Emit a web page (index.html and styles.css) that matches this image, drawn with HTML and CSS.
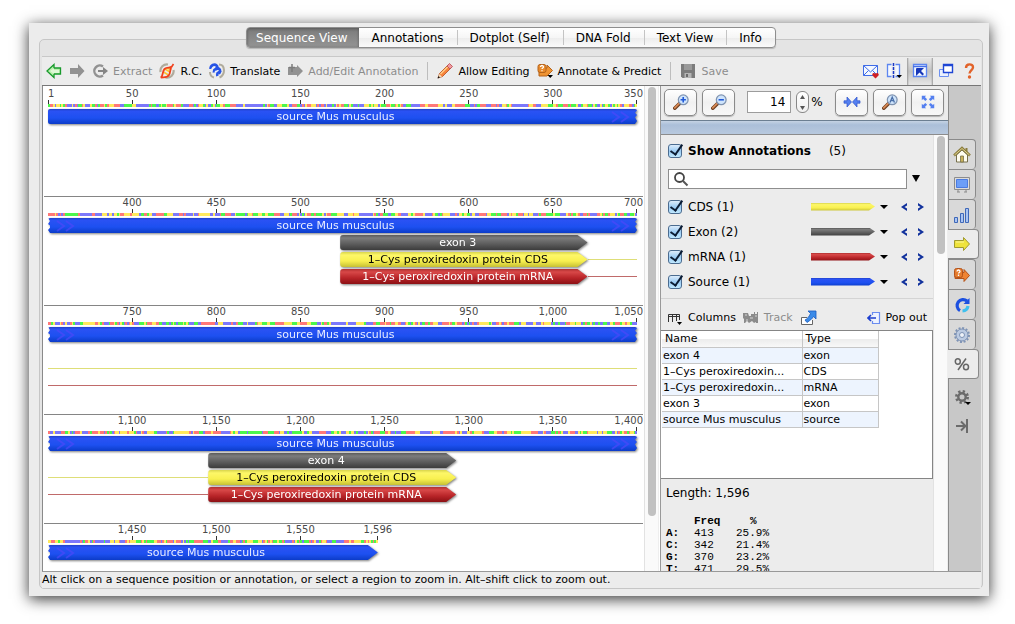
FILE: index.html
```html
<!DOCTYPE html>
<html lang="en">
<head>
  <meta charset="UTF-8">
  <title>Sequence View</title>
  <link rel="stylesheet" href="styles.css">
</head>
<body>

  <div class="window">
    <nav class="tabs">
      <button class="tab active">Sequence View</button>
      <button class="tab">Annotations</button>
      <button class="tab">Dotplot (Self)</button>
      <button class="tab">DNA Fold</button>
      <button class="tab">Text View</button>
      <button class="tab">Info</button>
    </nav>

    <div class="frame">
      <div class="toolbar">
        <button class="tool" aria-label="Back">
          <svg width="16" height="16" viewBox="0 0 16 16"><path d="M1 8 8 1.500V5h6.500v6H8v3.500z" fill="#b9f0ac" stroke="#189a2c" stroke-width="1.300"/><path d="M4 8 8 5v2h5v3H8v1z" fill="#dff8d6"/></svg>
        </button>
        <button class="tool" aria-label="Forward" disabled>
          <svg width="16" height="16" viewBox="0 0 16 16"><path d="M15.500 8 9 1v4H1v6h8v4z" fill="#929292"/></svg>
        </button>
        <button class="tool" disabled>
          <svg width="16" height="16" viewBox="0 0 16 16"><path d="M11 3.500A5.500 5.500 0 1 0 11 12.500" fill="none" stroke="#929292" stroke-width="2.400"/><path d="M6 7h5V4l5 4-5 4V9H6z" fill="#858585"/></svg>
          Extract
        </button>
        <button class="tool">
          <svg width="16" height="16" viewBox="0 0 16 16"><path d="M1.500 9A6.500 6.500 0 0 1 9 1.500M14.500 7a6.500 6.500 0 0 1-8 7.500" fill="none" stroke="#b0ab9c" stroke-width="2.200"/><path d="M6 6l5 3M4.500 9l5 3M8 4.500l4 2.500" stroke="#ffc42e" stroke-width="1.600"/><path d="M1.500 14.500c3-1 1.500-6 4-8.500s5.500-.5 7.500-2.500M2 14.500c3-.5 6 .5 8-2.500s0-6 4.500-11" fill="none" stroke="#f0401c" stroke-width="1.800"/></svg>
          R.C.
        </button>
        <button class="tool">
          <svg width="16" height="16" viewBox="0 0 16 16"><path d="M10 1.500c6 0 7 10 .5 13M1 9c0 3 2 5 4 5.500" fill="none" stroke="#b0ab9c" stroke-width="2"/><path d="M1.500 6c0-4 4-5.500 6-3.500 1.500 1.500 1 3.500-.5 4.500M5 9.500c-.5-3.500 3-5.500 5.200-3.500 1.500 1.500 1 3.500-.5 4.500M8.500 13c-1-3 1.500-5 3.700-3.800" fill="none" stroke="#2754e6" stroke-width="2.600"/><path d="M2.500 5.500 6 4.500M5.800 9l3.500-1.500" stroke="#eef3ff" stroke-width="1.200"/></svg>
          Translate
        </button>
        <button class="tool" disabled>
          <svg width="16" height="16" viewBox="0 0 16 16"><path d="M1 4h9V2l6 6-6 6v-2H1z" fill="#929292"/><path d="M5 1v8M2 4.500h6" stroke="#7b7b7b" stroke-width="1.500"/></svg>
          Add/Edit Annotation
        </button>
        <span class="sep"></span>
        <button class="tool">
          <svg width="16" height="16" viewBox="0 0 16 16"><path d="M1 15l1.500-4.500L10.500 2.500 13.500 5.500 5.500 13.500z" fill="#f7833c" stroke="#b24a1a" stroke-width=".8"/><path d="M3.500 11 11 3.500" stroke="#ffd08a" stroke-width="1.300"/><path d="M10 3 12.500.5l3 3-2.500 2.500z" fill="#f09aa0" stroke="#b8464c" stroke-width=".8"/><path d="M1 15l1.300-4 2.700 2.700z" fill="#f3ddbb"/><path d="M.5 15.500 1.500 13l1.500 1.500z" fill="#111"/></svg>
          Allow Editing
        </button>
        <button class="tool">
          <svg width="16" height="16" viewBox="0 0 16 16"><path d="M7 5h3V2l5.500 5.500L10 13H2V8" fill="#ef9433" stroke="#b4631b"/><rect x="1" y="1.500" width="8" height="8" rx="2" fill="#e98b2c" stroke="#b4631b"/><path d="M3.500 4c0-2 3-2 3 0 0 1-1.500 1-1.500 2M5 7.300v1" fill="none" stroke="#fff" stroke-width="1.300"/><path d="M10.500 12H16l-2.750 3z"/></svg>
          Annotate &amp; Predict
        </button>
        <span class="sep"></span>
        <button class="tool" disabled>
          <svg width="16" height="16" viewBox="0 0 16 16"><path d="M1 1h14v14H2.500L1 13.500z" fill="#7c7c7c"/><path d="M4 1h8v6H4z" fill="#9a9a9a"/><path d="M4.500 10h7v5h-7z" fill="#b5b5b5"/><path d="M6 11h2v3H6z" fill="#6b6b6b"/></svg>
          Save
        </button>

        <span class="spacer"></span>

        <button class="tool" aria-label="Send mail">
          <svg width="16" height="16" viewBox="0 0 16 16"><path d="M.5 2.500h14v10H.5z" fill="#f4f8ff" stroke="#3f6ce8"/><path d="M.5 2.500 7.500 9l7-6.500M.5 12.500l5-5M14.500 12.500l-5-5" fill="none" stroke="#3f6ce8"/><path d="M12.500 15.500 9.500 12.500c-1-2 1.500-3.500 3-1.700 1.500-1.800 4-.3 3 1.700z" fill="#cf1f25"/></svg>
        </button>
        <button class="tool" aria-label="Split view">
          <svg width="16" height="16" viewBox="0 0 16 16"><path d="M5.500 1.500h-4v12h4M9.500 1.500h4v12h-4" fill="#f4f8ff" stroke="#5d86f0" stroke-width="1.300"/><path d="M7.500 0v16" stroke="#1737c8" stroke-width="1.500" stroke-dasharray="3 1"/><path d="M10.500 12H16l-2.750 3z"/></svg>
        </button>
        <button class="tool pressed" aria-label="Dock panel">
          <svg width="16" height="16" viewBox="0 0 16 16"><path d="M1.500 1.500h13v12h-13z" fill="#f4f8ff" stroke="#5d86f0" stroke-width="1.300"/><path d="M1 3.500h14" stroke="#4670e8" stroke-width="1.500"/><path d="M5 12V6h6L9 8l3 3-1.500 1.500-3-3z" fill="#1737b8"/><path d="M4.500 12.500v-7h7" fill="none" stroke="#1737b8"/></svg>
        </button>
        <button class="tool" aria-label="New window">
          <svg width="16" height="16" viewBox="0 0 16 16"><path d="M1.500 6.500h9v7h-9z" fill="#eaf1ff" stroke="#6c90f0"/><path d="M5.500 1.500h9v8h-9z" fill="#fff" stroke="#1f46d4" stroke-width="1.400"/><path d="M5 2.500h10" stroke="#1f46d4" stroke-width="1.500"/></svg>
        </button>
        <button class="tool" aria-label="Help">
          <svg width="16" height="16" viewBox="0 0 16 16"><path d="M5 5c0-5 7-4.500 7-.8C12 7 8.800 7 8.500 10.500" fill="none" stroke="#e2632a" stroke-width="2.400"/><circle cx="8.500" cy="14" r="1.700" fill="#e2632a"/></svg>
        </button>
      </div>

      <div class="content">
        <div class="map">
          <div id="rows" class="rows"></div>
          <div class="scrollbar"><div class="thumb"></div></div>
        </div>

        <div class="side">
          <div class="zoombar">
            <button class="key" aria-label="Zoom in">
              <svg width="16" height="16" viewBox="0 0 18 18"><path d="M2 16l6-6" stroke="#6d3f22" stroke-width="4" stroke-linecap="round"/><path d="M2 15.500l5-5" stroke="#d98a55" stroke-width="2" stroke-linecap="round"/><circle cx="11.500" cy="6.500" r="5.500" fill="#cfe4fb" stroke="#7f93b0" stroke-width="1.400"/><path d="M11.500 3.500v6M8.500 6.500h6" stroke="#2059d8" stroke-width="1.800"/></svg>
            </button>
            <button class="key" aria-label="Zoom out">
              <svg width="16" height="16" viewBox="0 0 18 18"><path d="M2 16l6-6" stroke="#6d3f22" stroke-width="4" stroke-linecap="round"/><path d="M2 15.500l5-5" stroke="#d98a55" stroke-width="2" stroke-linecap="round"/><circle cx="11.500" cy="6.500" r="5.500" fill="#cfe4fb" stroke="#7f93b0" stroke-width="1.400"/><path d="M8.500 6.500h6" stroke="#2059d8" stroke-width="1.800"/></svg>
            </button>
            <span class="spacer"></span>
            <input id="zoom" class="zoom" type="text" value="14">
            <span class="stepper">
              <button aria-label="Increase zoom"><svg width="7" height="5" viewBox="0 0 7 5"><path d="M3.500 0 6 4H1z" fill="#555"/></svg></button>
              <button aria-label="Decrease zoom"><svg width="7" height="5" viewBox="0 0 7 5"><path d="M3.500 5 6 1H1z" fill="#555"/></svg></button>
            </span>
            <label for="zoom">%</label>
            <span class="spacer"></span>
            <button class="key" aria-label="Collapse">
              <svg width="18" height="18" viewBox="0 0 18 18"><path d="M1 7.800h3V4l4.500 5L4 14v-3.800H1zM17 7.800h-3V4L9.500 9l4.500 5v-3.800h3z" fill="#5580f0" stroke="#2b52cc" stroke-width=".7"/></svg>
            </button>
            <button class="key" aria-label="Zoom to letters">
              <svg width="16" height="16" viewBox="0 0 18 18"><path d="M2 16l6-6" stroke="#6d3f22" stroke-width="4" stroke-linecap="round"/><path d="M2 15.500l5-5" stroke="#d98a55" stroke-width="2" stroke-linecap="round"/><circle cx="11.500" cy="6.500" r="5.500" fill="#cfe4fb" stroke="#7f93b0" stroke-width="1.400"/><path d="M9 9.500 11.500 3.500 14 9.500M10 7.500h3" fill="none" stroke="#4a6fa8" stroke-width="1.500"/></svg>
            </button>
            <button class="key" aria-label="Fit to window">
              <svg width="16" height="16" viewBox="0 0 18 18"><path d="M2 7V2h5L5.500 3.500 8 6 6 8 3.500 5.500zM11 2h5v5l-1.500-1.500L12 8l-2-2 2.500-2.500zM16 11v5h-5l1.500-1.500L10 12l2-2 2.500 2.500zM7 16H2v-5l1.500 1.500L6 10l2 2-2.500 2.500z" fill="#5580f0"/></svg>
            </button>
          </div>
          <div class="band"></div>

          <div class="side-body">
            <div class="options">
              <div class="annotations">
                <div class="line heading">
                  <input type="checkbox" id="show" class="check" checked>
                  <label for="show">Show Annotations</label>
                  <span class="count">(5)</span>
                </div>
                <div class="line search-line">
                  <div class="search">
                    <svg width="16" height="16" viewBox="0 0 16 16"><circle cx="6.500" cy="6.500" r="4.500" fill="none" stroke="#444" stroke-width="1.800"/><path d="M10 10l4.500 4.500" stroke="#555" stroke-width="2"/></svg>
                    <input type="text" aria-label="Filter annotations">
                  </div>
                  <button class="plain" aria-label="Search options"><svg width="8" height="7" viewBox="0 0 8 7"><path d="M0 0h8L4 7z"/></svg></button>
                </div>
                <div id="types"></div>
              </div>

              <div class="table-tools">
                <button class="tool">
                  <svg width="16" height="16" viewBox="0 0 16 16"><path d="M1.500 12V4.500h11V10M1 6.500h11M5.500 5v7M9.500 5v6" fill="none" stroke="#333"/><path d="M10 12h5l-2.500 3z"/></svg>
                  Columns
                </button>
                <button class="tool" disabled>
                  <svg width="16" height="16" viewBox="0 0 16 16"><path d="M0 3h5l1 3h2V4h3V2h1v2h2V2h1v11h-2v-1l-2 1-2-2-3 2-2-2-2 2H1v-4l-1-1z" fill="#8b8b8b"/><path d="M2 5h2M7 8h3M12 6h2M4 9v3" stroke="#d5d5d5"/></svg>
                  Track
                </button>
                <button class="tool" aria-label="Export">
                  <svg width="17" height="16" viewBox="0 0 17 16"><path d="M7 7.500H1.500v7h11V10" fill="#fff" stroke="#666"/><path d="M8 1h8v8l-2.500-2.500C12 9 10 10.500 7 12.500L5 10c2-1 4-3 5.500-6.500z" fill="#3b8be8" stroke="#1a5cc0" stroke-width=".8"/></svg>
                </button>
                <span class="spacer"></span>
                <button class="tool">
                  <svg width="14" height="14" viewBox="0 0 14 14"><path d="M5.500 4V1.500h7v11h-7V10" fill="#eef3ff" stroke="#6a8cf0" stroke-width="1.200"/><path d="M9 7H1M4 4 1 7l3 3" fill="none" stroke="#1d3fd0" stroke-width="1.600"/></svg>
                  Pop out
                </button>
              </div>

              <div class="table-box">
                <table class="list">
                  <thead>
                    <tr><th class="name">Name</th><th>Type</th></tr>
                  </thead>
                  <tbody>
                    <tr><td>exon 4</td><td>exon</td></tr>
                    <tr><td>1–Cys peroxiredoxin...</td><td>CDS</td></tr>
                    <tr><td>1–Cys peroxiredoxin...</td><td>mRNA</td></tr>
                    <tr><td>exon 3</td><td>exon</td></tr>
                    <tr><td>source Mus musculus</td><td>source</td></tr>
                  </tbody>
                </table>
              </div>

              <div class="stats">
                <p>Length: 1,596</p>
                <table class="freq">
                  <tr><th></th><th>Freq</th><th class="pct">%</th></tr>
                  <tr><th>A:</th><td>413</td><td>25.9%</td></tr>
                  <tr><th>C:</th><td>342</td><td>21.4%</td></tr>
                  <tr><th>G:</th><td>370</td><td>23.2%</td></tr>
                  <tr><th>T:</th><td>471</td><td>29.5%</td></tr>
                </table>
              </div>
            </div>
            <div class="scrollbar"><div class="thumb short"></div></div>
          </div>
        </div>

        <div class="dock">
          <button class="dock-tab" aria-label="Home">
            <svg width="18" height="18" viewBox="0 0 18 18"><path d="M3.500 9v7h11V9L9 4z" fill="#fffdf0" stroke="#77704d"/><path d="M1 9.500 9 2l8 7.500" fill="none" stroke="#8a7c3e" stroke-width="2.400"/><path d="M1.500 9 9 2.500 16.500 9" fill="none" stroke="#e0d28c"/><path d="M12.500 2h2v4l-2-2z" fill="#8a7c3e"/><path d="M7.500 10h3v6h-3z" fill="#c9b35a" stroke="#77704d" stroke-width=".8"/></svg>
          </button>
          <button class="dock-tab" aria-label="Display">
            <svg width="18" height="18" viewBox="0 0 18 18"><path d="M1.500 1.500h15v12h-15z" fill="#dcdcdc" stroke="#8c8c8c"/><path d="M3.500 3.500h11v8h-11z" fill="#6c9ef8" stroke="#4b7be0"/><path d="M5 14v2M13 14v2M4 16h3M11 16h3" stroke="#8c8c8c"/></svg>
          </button>
          <button class="dock-tab" aria-label="Graphs">
            <svg width="18" height="18" viewBox="0 0 18 18"><path d="M1.500 11.500h3v5h-3zM7.500 7.500h3v9h-3zM12.500 2.500h3v14h-3z" fill="#a8c4f4" stroke="#3f68b8"/></svg>
          </button>
          <button class="dock-tab active" aria-label="Annotations and tracks">
            <svg width="18" height="18" viewBox="0 0 18 18"><path d="M1.500 5.500h9v-3L16.500 9l-6 6.500v-3h-9z" fill="#efe33c" stroke="#a09a30"/><path d="M3 7h8" stroke="#fbf69a"/></svg>
          </button>
          <button class="dock-tab" aria-label="Annotate and predict">
            <svg width="18" height="18" viewBox="0 0 18 18"><path d="M7 6.500h4v-3L16.500 9.500l-5.500 6v-3H2v-4" fill="#ef8433" stroke="#b4531b"/><rect x="1.500" y="2.500" width="8" height="9" rx="2" fill="#e57b2c" stroke="#b4531b"/><path d="M4 5.500c0-2 3-2 3 0 0 1-1.500 1-1.500 2M5.500 8.500v1.500" fill="none" stroke="#fff" stroke-width="1.300"/></svg>
          </button>
          <button class="dock-tab" aria-label="Restriction">
            <svg width="18" height="18" viewBox="0 0 18 18"><path d="M14 5A6 6 0 1 0 7 14.700" fill="none" stroke="#1c50e0" stroke-width="3.200"/><path d="M9.500 15A6 6 0 0 0 15 10" fill="none" stroke="#3fc0ee" stroke-width="3.200"/><path d="M16.500 2v6h-6z" fill="#1c50e0"/></svg>
          </button>
          <button class="dock-tab" aria-label="Advanced">
            <svg width="18" height="18" viewBox="0 0 18 18"><circle cx="9" cy="9" r="7" fill="none" stroke="#7e93b5" stroke-width="2" stroke-dasharray="2 1.660"/><circle cx="9" cy="9" r="6" fill="#bccbe2" stroke="#7e93b5"/><circle cx="9" cy="9" r="2.500" fill="#eef2f8" stroke="#7e93b5"/></svg>
          </button>
          <button class="dock-tab active" aria-label="Statistics">
            <svg width="18" height="18" viewBox="0 0 18 18"><path d="M13 3.500 5 15" stroke="#666" stroke-width="1.500"/><ellipse cx="4.800" cy="6.500" rx="2.500" ry="2.800" fill="none" stroke="#666" stroke-width="1.500"/><ellipse cx="13" cy="12" rx="2.500" ry="2.800" fill="none" stroke="#666" stroke-width="1.500"/></svg>
          </button>
          <button class="dock-tool" aria-label="Settings">
            <svg width="18" height="18" viewBox="0 0 18 18"><circle cx="8" cy="8" r="5.500" fill="none" stroke="#6b6b6b" stroke-width="3" stroke-dasharray="2.200 2.120"/><circle cx="8" cy="8" r="3.700" fill="none" stroke="#6b6b6b" stroke-width="2.400"/><path d="M11 13h6l-3 3z"/></svg>
          </button>
          <button class="dock-tool" aria-label="Hide panel">
            <svg width="18" height="18" viewBox="0 0 18 18"><path d="M2 9h9M7 4.500 11.500 9 7 13.500M13 2v14" fill="none" stroke="#6b6b6b" stroke-width="2"/></svg>
          </button>
        </div>
      </div>

      <div class="status">Alt click on a sequence position or annotation, or select a region to zoom in. Alt–shift click to zoom out.</div>
    </div>
  </div>

  <script>
    const PER_ROW = 350;
    const LENGTH = 1596;
    const colors = ['#4cf74c', '#ff7878', '#ffe95c', '#7c78fa'];

    // start and end are percentages of the row
    const rows = [
      { from: 0 },
      { from: 350, exon: 'exon 3', start: 49.6, end: 91.6, after: true },
      { from: 700, lines: true },
      { from: 1050, exon: 'exon 4', start: 27.2, end: 69.3, before: true },
      { from: 1400 }
    ];

    const types = [
      ['cds', 'CDS (1)'],
      ['exon', 'Exon (2)'],
      ['mrna', 'mRNA (1)'],
      ['src', 'Source (1)']
    ];

    let seed = 7;
    function random() {
      seed = (seed * 16807) % 2147483647;
      return seed / 2147483647;
    }

    function ruler(from) {
      let html = '<div class="ruler">';
      html += `<span class="mark first">${from === 0 ? '1' : ''}</span>`;
      for (let i = 1; i <= 7; i++) {
        const pos = from + i * 50;
        if (pos > LENGTH) {
          // last base, closer to the previous mark than a full step
          const step = (LENGTH - pos + 50) / 50;
          html += `<span class="mark" style="flex-grow: ${(step - 0.5) * 2}">${LENGTH.toLocaleString('en-US')}</span>`;
          html += `<span class="rest" style="flex-grow: ${7 - (i - 0.5) - (step - 0.5) * 2}"></span>`;
          break;
        }
        html += `<span class="mark${i === 7 ? ' last' : ''}"><span>${pos.toLocaleString('en-US')}</span></span>`;
      }
      return html + '</div>';
    }

    function strip(count) {
      let rects = '';
      let color = 0;
      for (let i = 0; i < count; i++) {
        if (random() > 0.3) color = Math.floor(random() * 4);
        rects += `<rect x="${i}" width="1.1" height="3" fill="${colors[color]}"/>`;
      }
      const width = count / PER_ROW * 100;
      return `<svg class="strip" style="width: ${width}%" viewBox="0 0 ${count} 3" preserveAspectRatio="none">${rects}</svg>`;
    }

    function chevrons(show) {
      const path = show ? '<path d="M1 1l7 5-7 5M10 1l7 5-7 5" fill="none" stroke="#4b48fa" stroke-width="2" opacity="0.7"/>' : '';
      return `<svg width="20" height="12" viewBox="0 0 20 12">${path}</svg>`;
    }

    function source(row) {
      const count = Math.min(PER_ROW, LENGTH - row.from);
      const last = count < PER_ROW;
      const shape = row.from === 0 ? 'torn-right' : last ? 'torn-left' : 'torn-both';
      return `<div class="lane"><div class="shadow" style="width: ${count / PER_ROW * 100}%">
        <div class="bar src ${shape}">${chevrons(row.from > 0)}<span>source Mus musculus</span>${chevrons(!last)}</div>
      </div></div>`;
    }

    function lane(cls, text, row) {
      const line = cls === 'exon' ? '' : `line-${cls}`;
      if (row.lines) return `<div class="lane"><i class="${line}" style="width: 100%"></i></div>`;
      return `<div class="lane">
        <i class="${row.before ? line : ''}" style="width: ${row.start}%"></i>
        <div class="shadow" style="width: ${row.end - row.start}%"><div class="bar arrow ${cls}">${text}</div></div>
        <i class="${row.after ? line : ''}" style="width: ${100 - row.end}%"></i>
      </div>`;
    }

    document.getElementById('rows').innerHTML = rows.map((row) => {
      let html = '<div class="row">' + ruler(row.from);
      html += strip(Math.min(PER_ROW, LENGTH - row.from));
      html += source(row);
      if (row.exon || row.lines) {
        html += lane('exon', row.exon, row);
        html += lane('cds', '1–Cys peroxiredoxin protein CDS', row);
        html += lane('mrna', '1–Cys peroxiredoxin protein mRNA', row);
      }
      return html + '</div>';
    }).join('');

    document.getElementById('types').innerHTML = types.map(([cls, text]) => `
      <div class="line type">
        <input type="checkbox" id="type-${cls}" class="check" checked>
        <label for="type-${cls}">${text}</label>
        <span class="swatch ${cls}"></span>
        <button class="plain" aria-label="${text} colour"><svg width="8" height="4" viewBox="0 0 8 4"><path d="M0 0h8L4 4z"/></svg></button>
        <button class="plain prev" aria-label="Previous ${text}"><svg width="6" height="8" viewBox="0 0 6 8"><path d="M6 0v2.500L3.500 4 6 5.500V8L0 4z" fill="#10309c"/></svg></button>
        <button class="plain next" aria-label="Next ${text}"><svg width="6" height="8" viewBox="0 0 6 8"><path d="M0 0v2.500L2.500 4 0 5.500V8l6-4z" fill="#10309c"/></svg></button>
      </div>`).join('');
  </script>

</body>
</html>
```

FILE: styles.css
```css
* {
  box-sizing: border-box;
}

html, body {
  margin: 0;
  height: 100%;
  font-family: "DejaVu Sans", sans-serif;
  font-size: 11px;
}

body {
  background: #fff;
  padding: 23px 26px 28px 29px;
  overflow: hidden;
}

button, input {
  font: inherit;
  color: inherit;
  margin: 0;
  padding: 0;
}

button {
  border: none;
  background: none;
}

svg {
  display: block;
  flex: none;
}

.spacer {
  flex: 1;
}

.window {
  height: 100%;
  display: flex;
  flex-direction: column;
  padding: 4px 6px 7px 10px;
  background: #ececec;
  box-shadow: 0 3px 14px rgba(0, 0, 0, 0.8);
}

/* Tabs sit over the top edge of the frame */
.tabs {
  position: relative;
  z-index: 1;
  display: flex;
  align-self: center;
  height: 21px;
  border: 1px solid #8e8e8e;
  border-radius: 4px;
  background: linear-gradient(#fff, #f6f6f6 50%, #ececec 51%, #fafafa);
  box-shadow: 0 1px 1px rgba(0, 0, 0, 0.2);
  overflow: hidden;
}

.tab {
  padding: 0 13px;
  font-size: 12px;
  display: flex;
  align-items: center;
}

.tab::after {
  content: "";
  width: 1px;
  height: 15px;
  margin-right: -14px;
  margin-left: 13px;
  background: #c4c4c4;
}

.tab:last-child::after, .tab.active::after {
  display: none;
}

.tab.active {
  padding: 0 11px 0 9px;
  color: #fff;
  background: linear-gradient(#7b7b7b, #949494);
  box-shadow: inset 0 1px 3px #555;
}

.frame {
  flex: 1;
  min-height: 0;
  display: flex;
  flex-direction: column;
  margin-top: -9px;
  padding: 16px 1px 0 2px;
  border: 1px solid #c6c6c6;
  border-radius: 5px;
  background: #e4e4e4;
}

.toolbar {
  flex: none;
  height: 29px;
  display: flex;
  align-items: center;
  gap: 7px;
  padding: 0 4px 0 4px;
  border-top: 1px solid #c8c8c8;
  background: #ececec;
}

.tool {
  display: flex;
  align-items: center;
  gap: 5px;
  white-space: nowrap;
}

.tool:disabled {
  color: #8c8c8c;
}

.tool.pressed {
  height: 27px;
  padding: 0 5px;
  margin: 0 -2px;
  background: linear-gradient(90deg, #9a9a9a, transparent 2px, transparent calc(100% - 2px), #9a9a9a), linear-gradient(#e6e6e6, #c2c2c2 50%, #e6e6e6);
}

.sep {
  width: 1px;
  height: 18px;
  margin: 0 2px;
  background: #bdbdbd;
}

.content {
  flex: 1;
  min-height: 0;
  display: flex;
  border-top: 1px solid #777;
  border-bottom: 1px solid #999;
}

/* Sequence map */
.map {
  flex: 1;
  min-width: 0;
  display: flex;
  background: #fff;
  border-left: 1px solid #8a8a8a;
  padding-right: 1px;
  overflow: hidden;
}

.rows {
  flex: 1;
  min-width: 0;
  padding: 1px 1px 0;
}

.row {
  height: 109px;
  padding: 0 6px 0 4px;
  border-top: 1px solid #858585;
}

.row:first-child {
  border-top-color: #fff;
}

.ruler {
  display: flex;
  height: 16px;
  color: #4a4a4a;
  font-size: 10px;
  line-height: 12px;
}

.mark {
  flex: 1 1 0;
  width: 0;
  display: flex;
  flex-direction: column;
  align-items: center;
  white-space: nowrap;
}

.mark::after {
  content: "";
  width: 1px;
  height: 4px;
  background: #333;
}

.mark.first {
  flex-grow: 0.5;
  align-items: flex-start;
}

.mark.first:empty::after {
  display: none;
}

.mark.last {
  flex-grow: 0.5;
  align-items: flex-end;
}

.mark.last span {
  margin-right: -6px;
}

.rest {
  flex: 1 1 0;
}

.strip {
  height: 3px;
  shape-rendering: crispEdges;
}

.lane {
  display: flex;
  height: 15px;
  margin-top: 2px;
}

.lane i {
  height: 1px;
  align-self: center;
}

.line-cds {
  background: #dede78;
}

.line-mrna {
  background: #c06a6a;
}

.shadow {
  flex: none;
  filter: drop-shadow(1px 1px 1px rgba(0, 0, 0, 0.5));
}

.bar {
  height: 15px;
  line-height: 15px;
  text-align: center;
  color: #fff;
  white-space: nowrap;
}

.arrow {
  padding-right: 12px;
  border-radius: 3px;
  clip-path: polygon(0 0, calc(100% - 10px) 0, 100% 50%, calc(100% - 10px) 100%, 0 100%);
}

.bar.src {
  display: flex;
  align-items: center;
  padding: 0 6px 0 8px;
  border-radius: 2px;
  color: #e8ecff;
}

.bar.src span {
  flex: 1;
  padding-right: 16px;
}

.torn-right {
  clip-path: polygon(0 0, 100% 0, 100% 10%, calc(100% - 2px) 25%, 100% 40%, calc(100% - 2px) 55%, 100% 80%, calc(100% - 2px) 100%, 0 100%);
}

.torn-both {
  clip-path: polygon(0 0, 100% 0, 100% 10%, calc(100% - 2px) 25%, 100% 40%, calc(100% - 2px) 55%, 100% 80%, calc(100% - 2px) 100%, 2px 100%, 0 80%, 2px 65%, 2px 50%, 0 40%, 2px 20%);
}

.torn-left {
  clip-path: polygon(0 0, calc(100% - 10px) 0, 100% 50%, calc(100% - 10px) 100%, 2px 100%, 0 80%, 2px 65%, 2px 50%, 0 40%, 2px 20%);
}

.src {
  background: linear-gradient(#2141c8, #2a52f4 15%, #1d50f0 60%, #0c3cc8);
}

.exon {
  background: linear-gradient(#5a5a5a, #7c7c7c 20%, #5c5c5c 60%, #3c3c3c);
}

.cds {
  background: linear-gradient(#d8d44c, #fdf768 20%, #f8f050 60%, #c6c034);
}

.bar.cds {
  color: #000;
}

.mrna {
  background: linear-gradient(#b03030, #d84848 20%, #b82428 60%, #8c1014);
}

.scrollbar {
  flex: none;
  width: 15px;
  padding: 1px 3px 1px 3px;
  border-left: 1px solid #e2e2e2;
  border-right: 1px solid #eee;
  background: #fafafa;
}

.thumb {
  width: 8px;
  height: 429px;
  border-radius: 4px;
  background: #c1c1c1;
}

.thumb.short {
  height: 118px;
}

/* Side panel */
.side {
  flex: none;
  width: 288px;
  display: flex;
  flex-direction: column;
  border-left: 1px solid #999;
  background: #ececec;
}

.zoombar {
  flex: none;
  display: flex;
  align-items: center;
  gap: 5px;
  height: 34px;
  padding: 0 4px 2px 3px;
  font-size: 12px;
}

.key {
  width: 33px;
  height: 27px;
  display: flex;
  align-items: center;
  justify-content: center;
  border: 1px solid #8a8a8a;
  border-radius: 5px;
  background: linear-gradient(#fff, #f1f1f1 50%, #f8f8f8);
  box-shadow: 0 1px 1px rgba(0, 0, 0, 0.25);
}

.zoom {
  width: 44px;
  height: 22px;
  padding-right: 5px;
  border: 1px solid #9c9c9c;
  background: #fff;
  text-align: right;
}

.stepper {
  width: 13px;
  height: 22px;
  display: flex;
  flex-direction: column;
  border: 1px solid #888;
  border-radius: 6px;
  background: linear-gradient(#fff, #f0f0f0);
}

.stepper button {
  flex: 1;
  display: flex;
  align-items: center;
  justify-content: center;
}

.zoombar label {
  margin-left: -3px;
}

.band {
  flex: none;
  height: 15px;
  border-top: 1px solid #6c7f92;
  border-bottom: 1px solid #8c8c8c;
  background: linear-gradient(#c5d3e4, #abbfd9 30%, #b8c9de);
}

.side-body {
  flex: 1;
  min-height: 0;
  display: flex;
  overflow: hidden;
}

.options {
  flex: 1;
  min-width: 0;
}

.annotations {
  padding: 3px 9px 4px 7px;
  border-bottom: 1px solid #d4d4d4;
  font-size: 12px;
}

.line {
  height: 25px;
  display: flex;
  align-items: center;
}

.line label {
  margin-left: 6px;
}

.heading label {
  font-weight: bold;
}

.count {
  margin-left: 18px;
}

.check {
  appearance: none;
  flex: none;
  width: 14px;
  height: 14px;
  position: relative;
  border: 1px solid #4b6c90;
  border-radius: 3px;
  background: linear-gradient(#dcecfb, #9cccf4 50%, #bfe8ff);
}

.check:checked::after {
  content: "";
  position: absolute;
  left: 4px;
  top: -3px;
  width: 5px;
  height: 11px;
  border: solid #0b1c34;
  border-width: 0 2px 2px 0;
  transform: rotate(35deg);
}

.search-line {
  height: 31px;
  gap: 5px;
}

.search {
  flex: 1;
  display: flex;
  align-items: center;
  height: 20px;
  padding-left: 4px;
  border: 1px solid #8e8e8e;
  background: #fff;
}

.search input {
  flex: 1;
  min-width: 0;
  border: none;
  outline: none;
  background: none;
}

.plain {
  display: flex;
  align-items: center;
}

.search-line .plain {
  margin-right: 4px;
}

.type label {
  flex: 1;
}

.swatch {
  width: 64px;
  height: 8px;
  margin-right: 5px;
  clip-path: polygon(0 0, calc(100% - 6px) 0, 100% 50%, calc(100% - 6px) 100%, 0 100%);
}

.prev {
  margin: 0 11px 0 13px;
}

.table-tools {
  display: flex;
  align-items: center;
  gap: 7px;
  height: 31px;
  padding: 6px 6px 0 6px;
}

.table-box {
  height: 149px;
  padding-left: 1px;
  border: 1px solid #858585;
  border-left: none;
  background: #fff;
}

.list {
  width: 217px;
  table-layout: fixed;
  border-collapse: collapse;
}

.list th, .list td {
  height: 16px;
  padding: 0 1px;
  border-right: 1px solid #c6c6c6;
  border-bottom: 1px solid #c6c6c6;
  line-height: 15px;
  text-align: left;
  font-weight: normal;
  white-space: nowrap;
}

.list th {
  padding-left: 3px;
  background: linear-gradient(#fff 50%, #ececec 51%, #f8f8f8);
}

.list .name {
  width: 140px;
}

.list tbody tr:nth-child(odd) {
  background: #edf4fe;
}

.stats {
  padding: 6px 5px;
  font-size: 12px;
}

.stats p {
  margin: 0 0 14px;
  line-height: 16px;
}

.freq {
  border-collapse: collapse;
  font-family: "Liberation Mono", monospace;
  font-size: 11px;
  line-height: 12px;
}

.freq th, .freq td {
  padding: 0;
  text-align: left;
  width: 42px;
}

.freq th:first-child {
  width: 28px;
}

.freq .pct {
  padding-left: 14px;
}

/* Vertical tabs */
.dock {
  flex: none;
  width: 33px;
  display: flex;
  flex-direction: column;
  align-items: flex-start;
  padding-top: 53px;
  border-left: 1px solid #8a8a8a;
  background: #c8c8c8;
}

.dock-tab {
  width: 27px;
  height: 30px;
  display: flex;
  align-items: center;
  padding-left: 4px;
  border: solid #8a8a8a;
  border-width: 1px 1px 0 0;
  border-radius: 0 4px 4px 0;
  background: #d9d9d9;
}

.dock-tab.active {
  width: 31px;
  margin-left: -1px;
  padding-left: 5px;
  border-bottom-width: 1px;
  background: #ececec;
}

.dock-tool {
  height: 28px;
  display: flex;
  align-items: center;
  padding-left: 5px;
}

.dock-tab + .dock-tool {
  margin-top: 5px;
}

.status {
  flex: none;
  height: 16px;
  line-height: 16px;
  background: #ececec;
  white-space: nowrap;
}
```
